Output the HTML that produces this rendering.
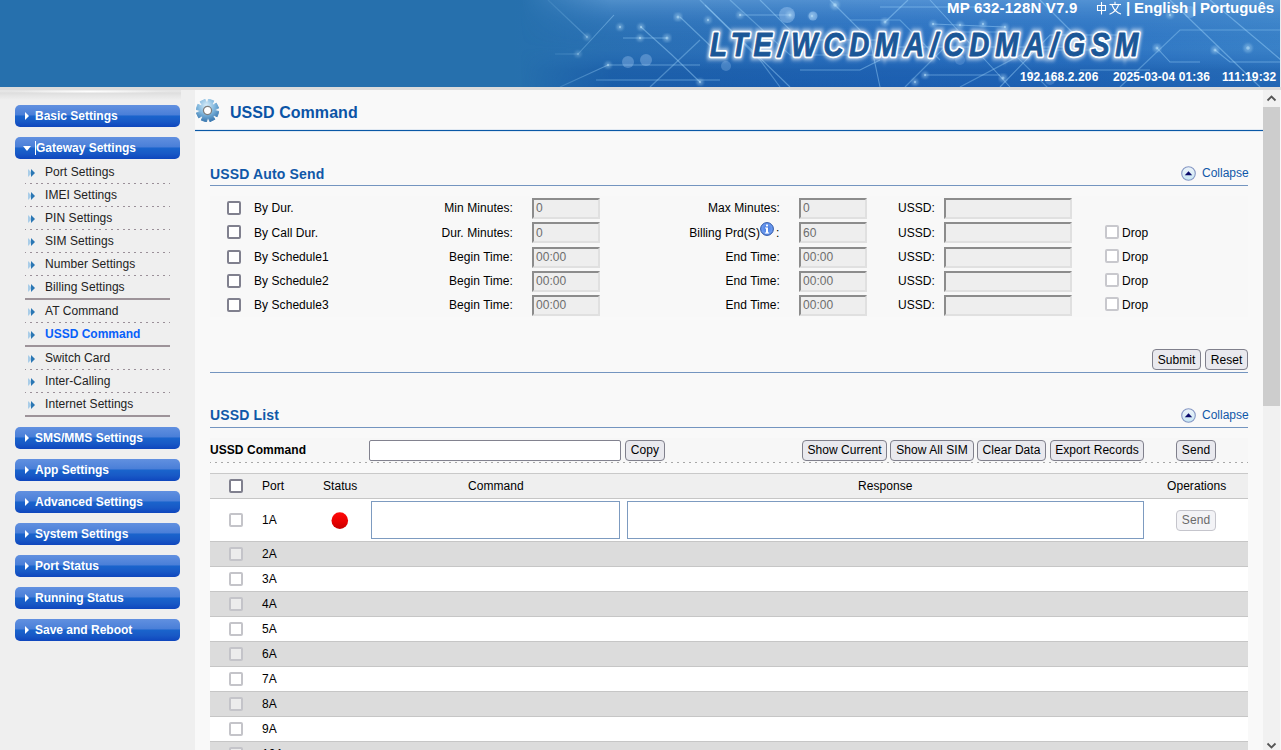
<!DOCTYPE html><html><head><meta charset="utf-8"><style>
*{box-sizing:border-box}
html,body{margin:0;padding:0;width:1281px;height:750px;overflow:hidden;font-family:"Liberation Sans",sans-serif;font-size:12px;color:#000;letter-spacing:0.06px}
body{background:#efefef;position:relative}
#hdr{position:absolute;left:0;top:0;width:1281px;height:87px;background:#2670ad;overflow:hidden}
#band{position:absolute;left:0;top:87px;width:1281px;height:3px;background:#dcdcdc}
#main{position:absolute;left:195px;top:90px;width:1068px;height:660px;background:#f9f9f9;overflow:hidden}
#sb{position:absolute;left:1263px;top:90px;width:17px;height:660px;background:#f1f1f1}
.a{position:absolute;white-space:nowrap}
.btn{position:absolute;left:15px;width:165px;height:22px;border-radius:5px;background:linear-gradient(#6190e0 0%,#4a7fd8 45%,#1a64cc 50%,#1859c6 75%,#0f46bd 100%);color:#fff;font-weight:bold;font-size:12px;line-height:22px;padding-left:20px;white-space:nowrap;letter-spacing:0}
.btn b{position:absolute;left:10px;top:7px;width:0;height:0;border-left:4px solid #fff;border-top:4px solid transparent;border-bottom:4px solid transparent}
.btn.open b{left:8px;top:9px;border-top:5px solid #fff;border-left:4px solid transparent;border-right:4px solid transparent;border-bottom:0}
.sub{position:absolute;left:25px;width:145px;height:23px;font-size:12px;color:#222;padding-left:20px;line-height:25px;white-space:nowrap}
.sub i{position:absolute;left:3px;top:9px;width:8px;height:8px}
.sub svg{display:block}
.dot{position:absolute;left:25px;width:145px;height:1px;background:repeating-linear-gradient(90deg,#9a8f98 0 1.9px,transparent 1.9px 5.8px);background-position:-1px 0}
.sol{position:absolute;left:25px;width:145px;height:2px;background:#9d9399}
.h2{position:absolute;left:210px;font-size:14px;font-weight:bold;color:#1058a8;white-space:nowrap;letter-spacing:0.15px}
.hl{position:absolute;left:210px;width:1038px;height:1px;background:#7495c0}
.cb{position:absolute;width:14px;height:14px;border:2px solid #80808e;border-radius:2px;background:#fff}
.cbl{position:absolute;width:14px;height:14px;border:2px solid #c4c4c9;border-radius:2px;background:#fff}
.cbd{position:absolute;width:14px;height:14px;border:2px solid #c8c8cd;border-radius:2px;background:#fff}
.in{position:absolute;height:21px;border-style:solid;border-width:2px;border-color:#8c8c8c #e0e0e0 #e0e0e0 #8c8c8c;background:#eeeeee;color:#6d6d6d;font-size:12px;line-height:17px;padding-left:2px;white-space:nowrap}
.lb{position:absolute;font-size:12px;white-space:nowrap}
.bt{position:absolute;height:21px;border:1px solid #80808c;border-radius:4px;background:#e9e9ee;font-size:12px;line-height:21px;text-align:center;white-space:nowrap;color:#000}
.ta{position:absolute;border:1px solid #7d9bc0;background:#fff}
.row{position:absolute;left:210px;width:1038px;height:25px;border-bottom:1px solid #c6c6c6}
</style></head><body>
<div id="hdr"></div><div id="band"></div>
<svg class="a" style="left:0;top:0" width="1281" height="87" viewBox="0 0 1281 87">
<defs>
<linearGradient id="hg1" x1="0" y1="0" x2="1" y2="0">
<stop offset="0" stop-color="#2670ad"/><stop offset="0.40" stop-color="#2670ad"/><stop offset="0.52" stop-color="#2b70b6"/><stop offset="0.70" stop-color="#2d73c2"/><stop offset="0.85" stop-color="#2f76c4"/><stop offset="1" stop-color="#3a82c8"/></linearGradient>
<linearGradient id="hg2" x1="0" y1="0" x2="0" y2="1">
<stop offset="0" stop-color="#7fb5e8" stop-opacity="0.45"/><stop offset="0.25" stop-color="#5c9ad8" stop-opacity="0.15"/><stop offset="0.55" stop-color="#1d5fb5" stop-opacity="0"/><stop offset="0.8" stop-color="#0b4a9c" stop-opacity="0.4"/><stop offset="1" stop-color="#0a4aa0" stop-opacity="0.5"/></linearGradient>
<linearGradient id="hg3" x1="0" y1="0" x2="1" y2="0">
<stop offset="0" stop-color="#fff" stop-opacity="0"/><stop offset="0.12" stop-color="#fff" stop-opacity="1"/><stop offset="1" stop-color="#fff" stop-opacity="1"/></linearGradient>
<mask id="hm"><rect x="520" y="0" width="761" height="87" fill="url(#hg3)"/></mask>
<filter id="gl" x="-20%" y="-50%" width="140%" height="200%"><feGaussianBlur stdDeviation="2.2"/></filter>
<filter id="bl1"><feGaussianBlur stdDeviation="1.2"/></filter><filter id="bl0"><feGaussianBlur stdDeviation="0.4"/></filter>
</defs>
<rect width="1281" height="87" fill="url(#hg1)"/>
<g mask="url(#hm)">
<rect x="520" width="761" height="87" fill="url(#hg2)"/>
<g stroke="#a6dcff" stroke-opacity="0.42" stroke-width="1.1" fill="none" filter="url(#bl0)">
<path d="M548 0L587 37"/>
<path d="M614 15L578 54L555 54"/>
<path d="M623 38L667 38"/>
<path d="M641 27L672 55L700 82"/>
<path d="M680 17L720 55"/>
<path d="M608 65L700 65"/>
<path d="M596 80L720 80"/>
<path d="M705 5L790 87"/>
<path d="M760 0L800 40L880 40"/>
<path d="M830 0L870 40L880 87"/>
<path d="M740 15L790 15"/>
<path d="M908 0L885 22"/>
<path d="M880 7L1000 7"/>
<path d="M880 47L1080 47"/>
<path d="M930 0L1010 87"/>
<path d="M925 75L1000 75"/>
<path d="M933 24L1005 27"/>
<path d="M1157 48L1170 62L1200 62"/>
<path d="M1215 50L1230 62L1281 62"/>
<path d="M1210 0L1281 60"/>
<path d="M1170 0L1260 87"/>
<path d="M1040 0L1080 40"/>
<path d="M1080 70L1150 70"/>
<path d="M1000 87L1050 35L1120 35"/>
<path d="M560 87L608 65"/>
<path d="M800 70L860 70L880 60"/>
</g>
<circle cx="787" cy="15" r="8.0" fill="#b9dcff" fill-opacity="0.35" filter="url(#bl0)"/>
<circle cx="813" cy="16" r="4.5" fill="#b9dcff" fill-opacity="0.40" filter="url(#bl0)"/>
<circle cx="726" cy="66" r="5.0" fill="#b9dcff" fill-opacity="0.25" filter="url(#bl0)"/>
<circle cx="628" cy="62" r="6.0" fill="#b9dcff" fill-opacity="0.30" filter="url(#bl0)"/>
<circle cx="646" cy="60" r="6.0" fill="#b9dcff" fill-opacity="0.30" filter="url(#bl0)"/>
<circle cx="1190" cy="12" r="6.0" fill="#b9dcff" fill-opacity="0.25" filter="url(#bl0)"/>
<circle cx="1050" cy="80" r="5.0" fill="#b9dcff" fill-opacity="0.20" filter="url(#bl0)"/>
<circle cx="1100" cy="40" r="7.0" fill="#b9dcff" fill-opacity="0.18" filter="url(#bl0)"/>
<circle cx="960" cy="60" r="5.0" fill="#b9dcff" fill-opacity="0.20" filter="url(#bl0)"/>
<g stroke="#a6dcff" stroke-opacity="0.35" stroke-width="1.2" fill="none" filter="url(#bl0)">
<path d="M700 0L760 60L780 87"/>
<path d="M730 0L790 55L900 55"/>
<path d="M850 20L900 20L940 60"/>
<path d="M1000 40L1060 100"/>
<path d="M905 87L960 32L1010 32"/>
<path d="M1120 87L1180 30L1281 30"/>
<path d="M650 87L700 40"/>
<path d="M960 87L1030 50L1100 50"/>
</g>
<g fill="#c8ecff">
<circle cx="620" cy="27" r="3.5" fill-opacity="0.3" filter="url(#bl1)"/>
<circle cx="620" cy="27" r="1.2" fill-opacity="0.5"/>
<circle cx="641" cy="27" r="3.5" fill-opacity="0.3" filter="url(#bl1)"/>
<circle cx="641" cy="27" r="1.2" fill-opacity="0.5"/>
<circle cx="678" cy="17" r="4.0" fill-opacity="0.3" filter="url(#bl1)"/>
<circle cx="678" cy="17" r="1.5" fill-opacity="0.5"/>
<circle cx="708" cy="20" r="3.5" fill-opacity="0.3" filter="url(#bl1)"/>
<circle cx="708" cy="20" r="1.2" fill-opacity="0.5"/>
<circle cx="667" cy="38" r="4.0" fill-opacity="0.3" filter="url(#bl1)"/>
<circle cx="667" cy="38" r="1.5" fill-opacity="0.5"/>
<circle cx="640" cy="38" r="3.5" fill-opacity="0.3" filter="url(#bl1)"/>
<circle cx="640" cy="38" r="1.2" fill-opacity="0.5"/>
<circle cx="608" cy="65" r="3.5" fill-opacity="0.3" filter="url(#bl1)"/>
<circle cx="608" cy="65" r="1.2" fill-opacity="0.5"/>
<circle cx="790" cy="15" r="4.0" fill-opacity="0.3" filter="url(#bl1)"/>
<circle cx="790" cy="15" r="1.5" fill-opacity="0.5"/>
<circle cx="812" cy="16" r="3.5" fill-opacity="0.3" filter="url(#bl1)"/>
<circle cx="812" cy="16" r="1.2" fill-opacity="0.5"/>
<circle cx="835" cy="5" r="4.5" fill-opacity="0.3" filter="url(#bl1)"/>
<circle cx="835" cy="5" r="1.8" fill-opacity="0.5"/>
<circle cx="740" cy="15" r="3.5" fill-opacity="0.3" filter="url(#bl1)"/>
<circle cx="740" cy="15" r="1.2" fill-opacity="0.5"/>
<circle cx="885" cy="22" r="4.0" fill-opacity="0.3" filter="url(#bl1)"/>
<circle cx="885" cy="22" r="1.5" fill-opacity="0.5"/>
<circle cx="933" cy="24" r="3.5" fill-opacity="0.3" filter="url(#bl1)"/>
<circle cx="933" cy="24" r="1.2" fill-opacity="0.5"/>
<circle cx="960" cy="25" r="3.5" fill-opacity="0.3" filter="url(#bl1)"/>
<circle cx="960" cy="25" r="1.2" fill-opacity="0.5"/>
<circle cx="983" cy="24" r="3.5" fill-opacity="0.3" filter="url(#bl1)"/>
<circle cx="983" cy="24" r="1.2" fill-opacity="0.5"/>
<circle cx="1005" cy="27" r="3.5" fill-opacity="0.3" filter="url(#bl1)"/>
<circle cx="1005" cy="27" r="1.2" fill-opacity="0.5"/>
<circle cx="925" cy="75" r="3.5" fill-opacity="0.3" filter="url(#bl1)"/>
<circle cx="925" cy="75" r="1.2" fill-opacity="0.5"/>
<circle cx="1003" cy="78" r="4.0" fill-opacity="0.3" filter="url(#bl1)"/>
<circle cx="1003" cy="78" r="1.5" fill-opacity="0.5"/>
<circle cx="915" cy="82" r="3.5" fill-opacity="0.3" filter="url(#bl1)"/>
<circle cx="915" cy="82" r="1.2" fill-opacity="0.5"/>
<circle cx="1157" cy="48" r="4.0" fill-opacity="0.3" filter="url(#bl1)"/>
<circle cx="1157" cy="48" r="1.5" fill-opacity="0.5"/>
<circle cx="1215" cy="50" r="4.0" fill-opacity="0.3" filter="url(#bl1)"/>
<circle cx="1215" cy="50" r="1.5" fill-opacity="0.5"/>
<circle cx="1248" cy="48" r="4.5" fill-opacity="0.3" filter="url(#bl1)"/>
<circle cx="1248" cy="48" r="1.8" fill-opacity="0.5"/>
<circle cx="1170" cy="15" r="3.5" fill-opacity="0.3" filter="url(#bl1)"/>
<circle cx="1170" cy="15" r="1.2" fill-opacity="0.5"/>
<circle cx="700" cy="82" r="3.5" fill-opacity="0.3" filter="url(#bl1)"/>
<circle cx="700" cy="82" r="1.2" fill-opacity="0.5"/>
<circle cx="578" cy="54" r="3.5" fill-opacity="0.3" filter="url(#bl1)"/>
<circle cx="578" cy="54" r="1.2" fill-opacity="0.5"/>
<circle cx="587" cy="37" r="3.5" fill-opacity="0.3" filter="url(#bl1)"/>
<circle cx="587" cy="37" r="1.2" fill-opacity="0.5"/>
</g>
</g>
<g transform="translate(710,55.5) scale(0.84,1)">
<text x="0" y="0" font-family="Liberation Sans" font-weight="bold" font-style="italic" font-size="33" textLength="510" lengthAdjust="spacing" fill="#ffffff" stroke="#ffffff" stroke-width="7" stroke-opacity="0.7" fill-opacity="0.7" filter="url(#gl)">LTE/WCDMA/CDMA/GSM</text>
<text x="0" y="0" font-family="Liberation Sans" font-weight="bold" font-style="italic" font-size="33" textLength="510" lengthAdjust="spacing" fill="#ffffff" stroke="#ffffff" stroke-width="4.4" stroke-linejoin="round">LTE/WCDMA/CDMA/GSM</text>
<text x="0" y="0" font-family="Liberation Sans" font-weight="bold" font-style="italic" font-size="33" textLength="510" lengthAdjust="spacing" fill="#1b5797" stroke="#1b5797" stroke-width="0.9" stroke-linejoin="round">LTE/WCDMA/CDMA/GSM</text>
</g>
</svg>
<div class="a" style="left:947px;top:-1px;font-size:15px;font-weight:bold;color:#fff;letter-spacing:0.2px">MP 632-128N V7.9</div>
<svg class="a" style="left:1096px;top:1px" width="27" height="14" viewBox="0 0 27 14" fill="none" stroke="#fff" stroke-width="1.1"><path d="M1.5 4.5H9.5V9.5H1.5Z"/><path d="M5.5 1V13.5"/><path d="M19 0.8V3"/><path d="M13.5 3.5H25"/><path d="M16 4C17.5 8 20 11.5 25 13"/><path d="M22.5 4C21 8.5 18 11.5 13.5 13.2"/></svg>
<div class="a" style="left:1126px;top:-1px;font-size:15px;font-weight:bold;color:#fff">|</div>
<div class="a" style="left:1134px;top:-1px;font-size:15px;font-weight:bold;color:#fff;letter-spacing:0">English</div>
<div class="a" style="left:1192px;top:-1px;font-size:15px;font-weight:bold;color:#fff">|</div>
<div class="a" style="left:1200px;top:-1px;font-size:15px;font-weight:bold;color:#fff;letter-spacing:0">Português</div>
<div class="a" style="left:1020px;top:70px;letter-spacing:0.13px;font-size:12px;font-weight:bold;color:#fff">192.168.2.206</div>
<div class="a" style="left:1113px;top:70px;letter-spacing:0.1px;font-size:12px;font-weight:bold;color:#fff">2025-03-04 01:36</div>
<div class="a" style="left:1222px;top:70px;letter-spacing:0.1px;font-size:12px;font-weight:bold;color:#fff">111:19:32</div>
<div class="a" style="left:1280px;top:0;width:1px;height:87px;background:#e9ecef"></div>
<div class="btn" style="top:105px"><b></b>Basic Settings</div>
<div class="btn open" style="top:137px;padding-left:21px"><b></b>Gateway Settings</div>
<div class="a" style="left:35px;top:141px;width:1px;height:14px;background:#fff"></div>
<div class="sub" style="top:160px"><i><svg width="8" height="8" viewBox="0 0 8 8"><path d="M0 0L4 4L0 8Z" fill="#a9cde8"/><path d="M3 0L7 4L3 8Z" fill="#2a77b4"/></svg></i>Port Settings</div>
<div class="dot" style="top:183px"></div>
<div class="sub" style="top:183px"><i><svg width="8" height="8" viewBox="0 0 8 8"><path d="M0 0L4 4L0 8Z" fill="#a9cde8"/><path d="M3 0L7 4L3 8Z" fill="#2a77b4"/></svg></i>IMEI Settings</div>
<div class="dot" style="top:206px"></div>
<div class="sub" style="top:206px"><i><svg width="8" height="8" viewBox="0 0 8 8"><path d="M0 0L4 4L0 8Z" fill="#a9cde8"/><path d="M3 0L7 4L3 8Z" fill="#2a77b4"/></svg></i>PIN Settings</div>
<div class="dot" style="top:229px"></div>
<div class="sub" style="top:229px"><i><svg width="8" height="8" viewBox="0 0 8 8"><path d="M0 0L4 4L0 8Z" fill="#a9cde8"/><path d="M3 0L7 4L3 8Z" fill="#2a77b4"/></svg></i>SIM Settings</div>
<div class="dot" style="top:252px"></div>
<div class="sub" style="top:252px"><i><svg width="8" height="8" viewBox="0 0 8 8"><path d="M0 0L4 4L0 8Z" fill="#a9cde8"/><path d="M3 0L7 4L3 8Z" fill="#2a77b4"/></svg></i>Number Settings</div>
<div class="dot" style="top:275px"></div>
<div class="sub" style="top:275px"><i><svg width="8" height="8" viewBox="0 0 8 8"><path d="M0 0L4 4L0 8Z" fill="#a9cde8"/><path d="M3 0L7 4L3 8Z" fill="#2a77b4"/></svg></i>Billing Settings</div>
<div class="sol" style="top:298px"></div>
<div class="sub" style="top:299px"><i><svg width="8" height="8" viewBox="0 0 8 8"><path d="M0 0L4 4L0 8Z" fill="#a9cde8"/><path d="M3 0L7 4L3 8Z" fill="#2a77b4"/></svg></i>AT Command</div>
<div class="dot" style="top:322px"></div>
<div class="sub" style="top:322px;color:#0760fa;font-weight:bold;letter-spacing:0"><i><svg width="8" height="8" viewBox="0 0 8 8"><path d="M0 0L4 4L0 8Z" fill="#a9cde8"/><path d="M3 0L7 4L3 8Z" fill="#2a77b4"/></svg></i>USSD Command</div>
<div class="sol" style="top:345px"></div>
<div class="sub" style="top:346px"><i><svg width="8" height="8" viewBox="0 0 8 8"><path d="M0 0L4 4L0 8Z" fill="#a9cde8"/><path d="M3 0L7 4L3 8Z" fill="#2a77b4"/></svg></i>Switch Card</div>
<div class="dot" style="top:369px"></div>
<div class="sub" style="top:369px"><i><svg width="8" height="8" viewBox="0 0 8 8"><path d="M0 0L4 4L0 8Z" fill="#a9cde8"/><path d="M3 0L7 4L3 8Z" fill="#2a77b4"/></svg></i>Inter-Calling</div>
<div class="dot" style="top:392px"></div>
<div class="sub" style="top:392px"><i><svg width="8" height="8" viewBox="0 0 8 8"><path d="M0 0L4 4L0 8Z" fill="#a9cde8"/><path d="M3 0L7 4L3 8Z" fill="#2a77b4"/></svg></i>Internet Settings</div>
<div class="sol" style="top:415px"></div>
<div class="btn" style="top:427px"><b></b>SMS/MMS Settings</div>
<div class="btn" style="top:459px"><b></b>App Settings</div>
<div class="btn" style="top:491px"><b></b>Advanced Settings</div>
<div class="btn" style="top:523px"><b></b>System Settings</div>
<div class="btn" style="top:555px"><b></b>Port Status</div>
<div class="btn" style="top:587px"><b></b>Running Status</div>
<div class="btn" style="top:619px"><b></b>Save and Reboot</div>
<div id="main"></div><div id="sb"></div><div class="a" style="left:1280px;top:90px;width:1px;height:660px;background:#f8f8f8"></div>
<svg class="a" style="left:196px;top:99px" width="23" height="23" viewBox="0 0 22 22"><defs><radialGradient id="gg" cx="0.45" cy="0.28" r="0.85"><stop offset="0" stop-color="#d9eefa"/><stop offset="0.45" stop-color="#7fb6dd"/><stop offset="1" stop-color="#1b5c9c"/></radialGradient></defs><path d="M18.90 11.14 L21.96 11.96 L20.23 16.99 L17.31 15.75 L16.49 16.68 L18.07 19.43 L13.29 21.76 L12.10 18.82 L10.86 18.90 L10.04 21.96 L5.01 20.23 L6.25 17.31 L5.32 16.49 L2.57 18.07 L0.24 13.29 L3.18 12.10 L3.10 10.86 L0.04 10.04 L1.77 5.01 L4.69 6.25 L5.51 5.32 L3.93 2.57 L8.71 0.24 L9.90 3.18 L11.14 3.10 L11.96 0.04 L16.99 1.77 L15.75 4.69 L16.68 5.51 L19.43 3.93 L21.76 8.71 L18.82 9.90Z" stroke="url(#gg)" stroke-width="0.8" stroke-linejoin="round" fill="url(#gg)"/><circle cx="11" cy="11" r="3.9" fill="#fff" stroke="#7d7d7d" stroke-width="1.2"/></svg>
<div class="a" style="left:0;top:90px;width:181px;height:10px;background:linear-gradient(#e2e2e2 0,#e8e8e8 1px,#dedede 3px,#e6e6e6 6px,#efefef 10px)"></div>
<div class="a" style="left:10px;top:90px;width:160px;height:3px;background:radial-gradient(ellipse 50% 60% at 50% 50%,rgba(255,255,255,0.95),rgba(255,255,255,0) 100%)"></div>
<div class="a" style="left:1263px;top:107px;width:17px;height:299px;background:#cdcdcd"></div>
<svg class="a" style="left:1263px;top:90px" width="17" height="17" viewBox="0 0 17 17"><path d="M4.5 10.5L8.5 6.5L12.5 10.5" fill="none" stroke="#555" stroke-width="1.8"/></svg>
<svg class="a" style="left:1263px;top:733px" width="17" height="17" viewBox="0 0 17 17"><path d="M4.5 10.5L8.5 14.5L12.5 10.5" fill="none" stroke="#555" stroke-width="1.8"/></svg>
<div class="a" style="left:195px;top:130px;width:1068px;height:1px;background:#0a58a6;box-shadow:0 -0.5px 0 #c9d9ec,0 0.5px 0 #c9d9ec"></div>
<div class="a" style="left:230px;top:104px;font-size:16px;font-weight:bold;color:#0b54a6;letter-spacing:0.05px">USSD Command</div>
<div class="h2" style="top:166px">USSD Auto Send</div>
<div class="hl" style="top:185px"></div>
<div class="a" style="left:210px;top:196px;width:1038px;height:121px;background:#f8f8f8"></div>
<div class="cb" style="left:227px;top:201px"></div>
<div class="lb" style="left:254px;top:201px">By Dur.</div>
<div class="lb" style="right:768px;top:201px">Min Minutes:</div>
<div class="in" style="left:532px;top:198px;width:68px">0</div>
<div class="lb" style="right:501px;top:201px">Max Minutes:</div>
<div class="in" style="left:799px;top:198px;width:68px">0</div>
<div class="lb" style="left:898px;top:201px">USSD:</div>
<div class="in" style="left:944px;top:198px;width:128px"></div>
<div class="cb" style="left:227px;top:225px"></div>
<div class="lb" style="left:254px;top:226px">By Call Dur.</div>
<div class="lb" style="right:768px;top:226px">Dur. Minutes:</div>
<div class="in" style="left:532px;top:222px;width:68px;line-height:19px">0</div>
<div class="lb" style="right:521px;top:226px">Billing Prd(S)</div>
<div class="lb" style="left:776px;top:226px">:</div>
<svg class="a" style="left:760px;top:222px" width="14" height="14" viewBox="0 0 14 14"><defs><radialGradient id="ig" cx="0.5" cy="0.45" r="0.55"><stop offset="0" stop-color="#3f74dc"/><stop offset="0.75" stop-color="#6d9bf0"/><stop offset="1" stop-color="#5a86d8"/></radialGradient></defs><circle cx="7" cy="7" r="6.4" fill="url(#ig)" stroke="#2f57a8" stroke-width="1"/><path d="M5 5.5H8V10.5H9V11.5H5V10.5H6V6.5H5Z" fill="#fff"/><rect x="6" y="2.6" width="2" height="1.8" fill="#fff"/></svg>
<div class="in" style="left:799px;top:222px;width:68px;line-height:19px">60</div>
<div class="lb" style="left:898px;top:226px">USSD:</div>
<div class="in" style="left:944px;top:222px;width:128px"></div>
<div class="cbd" style="left:1105px;top:225px"></div>
<div class="lb" style="left:1122px;top:226px">Drop</div>
<div class="cb" style="left:227px;top:250px"></div>
<div class="lb" style="left:254px;top:250px">By Schedule1</div>
<div class="lb" style="right:768px;top:250px">Begin Time:</div>
<div class="in" style="left:532px;top:247px;width:68px">00:00</div>
<div class="lb" style="right:501px;top:250px">End Time:</div>
<div class="in" style="left:799px;top:247px;width:68px">00:00</div>
<div class="lb" style="left:898px;top:250px">USSD:</div>
<div class="in" style="left:944px;top:247px;width:128px"></div>
<div class="cbd" style="left:1105px;top:249px"></div>
<div class="lb" style="left:1122px;top:250px">Drop</div>
<div class="cb" style="left:227px;top:274px"></div>
<div class="lb" style="left:254px;top:274px">By Schedule2</div>
<div class="lb" style="right:768px;top:274px">Begin Time:</div>
<div class="in" style="left:532px;top:271px;width:68px">00:00</div>
<div class="lb" style="right:501px;top:274px">End Time:</div>
<div class="in" style="left:799px;top:271px;width:68px">00:00</div>
<div class="lb" style="left:898px;top:274px">USSD:</div>
<div class="in" style="left:944px;top:271px;width:128px"></div>
<div class="cbd" style="left:1105px;top:273px"></div>
<div class="lb" style="left:1122px;top:274px">Drop</div>
<div class="cb" style="left:227px;top:298px"></div>
<div class="lb" style="left:254px;top:298px">By Schedule3</div>
<div class="lb" style="right:768px;top:298px">Begin Time:</div>
<div class="in" style="left:532px;top:295px;width:68px">00:00</div>
<div class="lb" style="right:501px;top:298px">End Time:</div>
<div class="in" style="left:799px;top:295px;width:68px">00:00</div>
<div class="lb" style="left:898px;top:298px">USSD:</div>
<div class="in" style="left:944px;top:295px;width:128px"></div>
<div class="cbd" style="left:1105px;top:297px"></div>
<div class="lb" style="left:1122px;top:298px">Drop</div>
<div class="bt" style="left:1152px;top:349px;width:49px">Submit</div>
<div class="bt" style="left:1205px;top:349px;width:43px">Reset</div>
<div class="hl" style="top:372px"></div>
<svg class="a" style="left:1181px;top:166px" width="15" height="15" viewBox="0 0 15 15"><defs><linearGradient id="cg166" x1="0" y1="0" x2="0" y2="1"><stop offset="0" stop-color="#eef5fb"/><stop offset="0.5" stop-color="#dcedf6"/><stop offset="1" stop-color="#c4e6f4"/></linearGradient></defs><circle cx="7.5" cy="7.5" r="6.8" fill="url(#cg166)" stroke="#8597c4" stroke-width="1.1"/><path d="M3.8 9.2L7.5 5.2L11.2 9.2Z" fill="#0a0a6a"/></svg>
<div class="a" style="left:1202px;top:166px;color:#1058a8;letter-spacing:0">Collapse</div>
<div class="h2" style="top:407px">USSD List</div>
<div class="hl" style="top:427px"></div>
<svg class="a" style="left:1181px;top:408px" width="15" height="15" viewBox="0 0 15 15"><defs><linearGradient id="cg408" x1="0" y1="0" x2="0" y2="1"><stop offset="0" stop-color="#eef5fb"/><stop offset="0.5" stop-color="#dcedf6"/><stop offset="1" stop-color="#c4e6f4"/></linearGradient></defs><circle cx="7.5" cy="7.5" r="6.8" fill="url(#cg408)" stroke="#8597c4" stroke-width="1.1"/><path d="M3.8 9.2L7.5 5.2L11.2 9.2Z" fill="#0a0a6a"/></svg>
<div class="a" style="left:1202px;top:408px;color:#1058a8;letter-spacing:0">Collapse</div>
<div class="a" style="left:210px;top:438px;width:1038px;height:24px;background:#f7f7f7"></div>
<div class="a" style="left:210px;top:443px;font-weight:bold">USSD Command</div>
<div class="a" style="left:369px;top:440px;width:252px;height:21px;border:1px solid #82828f;border-radius:2px;background:#fff"></div>
<div class="bt" style="left:625px;top:440px;width:40px;line-height:19px">Copy</div>
<div class="bt" style="left:802px;top:440px;width:85px;line-height:19px">Show Current</div>
<div class="bt" style="left:890px;top:440px;width:84px;line-height:19px">Show All SIM</div>
<div class="bt" style="left:977px;top:440px;width:69px;line-height:19px">Clear Data</div>
<div class="bt" style="left:1050px;top:440px;width:94px;line-height:19px">Export Records</div>
<div class="bt" style="left:1176px;top:440px;width:40px;line-height:19px">Send</div>
<div class="a" style="left:210px;top:462px;width:1038px;height:1px;background:repeating-linear-gradient(90deg,#a8a8a8 0 2px,transparent 2px 6px);background-position:5px 0"></div>
<div class="a" style="left:210px;top:473px;width:1038px;height:26px;background:#efefef;border-top:1px solid #c9c9c9;border-bottom:1px solid #c6c6c6"></div>
<div class="cb" style="left:229px;top:479px"></div>
<div class="a" style="left:262px;top:479px">Port</div>
<div class="a" style="left:323px;top:479px">Status</div>
<div class="a" style="left:468px;top:479px">Command</div>
<div class="a" style="left:858px;top:479px">Response</div>
<div class="a" style="left:1167px;top:479px">Operations</div>
<div class="a" style="left:210px;top:499px;width:1038px;height:43px;background:#fff;border-bottom:1px solid #c6c6c6"></div>
<div class="cbl" style="left:229px;top:513px"></div>
<div class="a" style="left:262px;top:513px">1A</div>
<svg class="a" style="left:330px;top:511px" width="20" height="20" viewBox="0 0 20 20"><defs><linearGradient id="rd" x1="0" y1="0" x2="0" y2="1"><stop offset="0" stop-color="#ff0a0a"/><stop offset="0.6" stop-color="#e60000"/><stop offset="1" stop-color="#c40000"/></linearGradient></defs><circle cx="9.8" cy="9.6" r="8.3" fill="url(#rd)"/></svg>
<div class="ta" style="left:371px;top:501px;width:249px;height:38px"></div>
<div class="ta" style="left:627px;top:501px;width:517px;height:38px"></div>
<div class="bt" style="left:1176px;top:510px;width:40px;line-height:19px;color:#6a6a6a;border-color:#c5c5cc;background:#f3f3f6">Send</div>
<div class="row" style="top:542px;background:#dcdcdc"></div>
<div class="cbl" style="left:229px;top:547px;background:#ececec"></div>
<div class="a" style="left:262px;top:547px">2A</div>
<div class="row" style="top:567px;background:#ffffff"></div>
<div class="cbl" style="left:229px;top:572px;background:#fff"></div>
<div class="a" style="left:262px;top:572px">3A</div>
<div class="row" style="top:592px;background:#dcdcdc"></div>
<div class="cbl" style="left:229px;top:597px;background:#ececec"></div>
<div class="a" style="left:262px;top:597px">4A</div>
<div class="row" style="top:617px;background:#ffffff"></div>
<div class="cbl" style="left:229px;top:622px;background:#fff"></div>
<div class="a" style="left:262px;top:622px">5A</div>
<div class="row" style="top:642px;background:#dcdcdc"></div>
<div class="cbl" style="left:229px;top:647px;background:#ececec"></div>
<div class="a" style="left:262px;top:647px">6A</div>
<div class="row" style="top:667px;background:#ffffff"></div>
<div class="cbl" style="left:229px;top:672px;background:#fff"></div>
<div class="a" style="left:262px;top:672px">7A</div>
<div class="row" style="top:692px;background:#dcdcdc"></div>
<div class="cbl" style="left:229px;top:697px;background:#ececec"></div>
<div class="a" style="left:262px;top:697px">8A</div>
<div class="row" style="top:717px;background:#ffffff"></div>
<div class="cbl" style="left:229px;top:722px;background:#fff"></div>
<div class="a" style="left:262px;top:722px">9A</div>
<div class="row" style="top:742px;background:#dcdcdc"></div>
<div class="cbl" style="left:229px;top:747px;background:#ececec"></div>
<div class="a" style="left:262px;top:747px">10A</div>
</body></html>
